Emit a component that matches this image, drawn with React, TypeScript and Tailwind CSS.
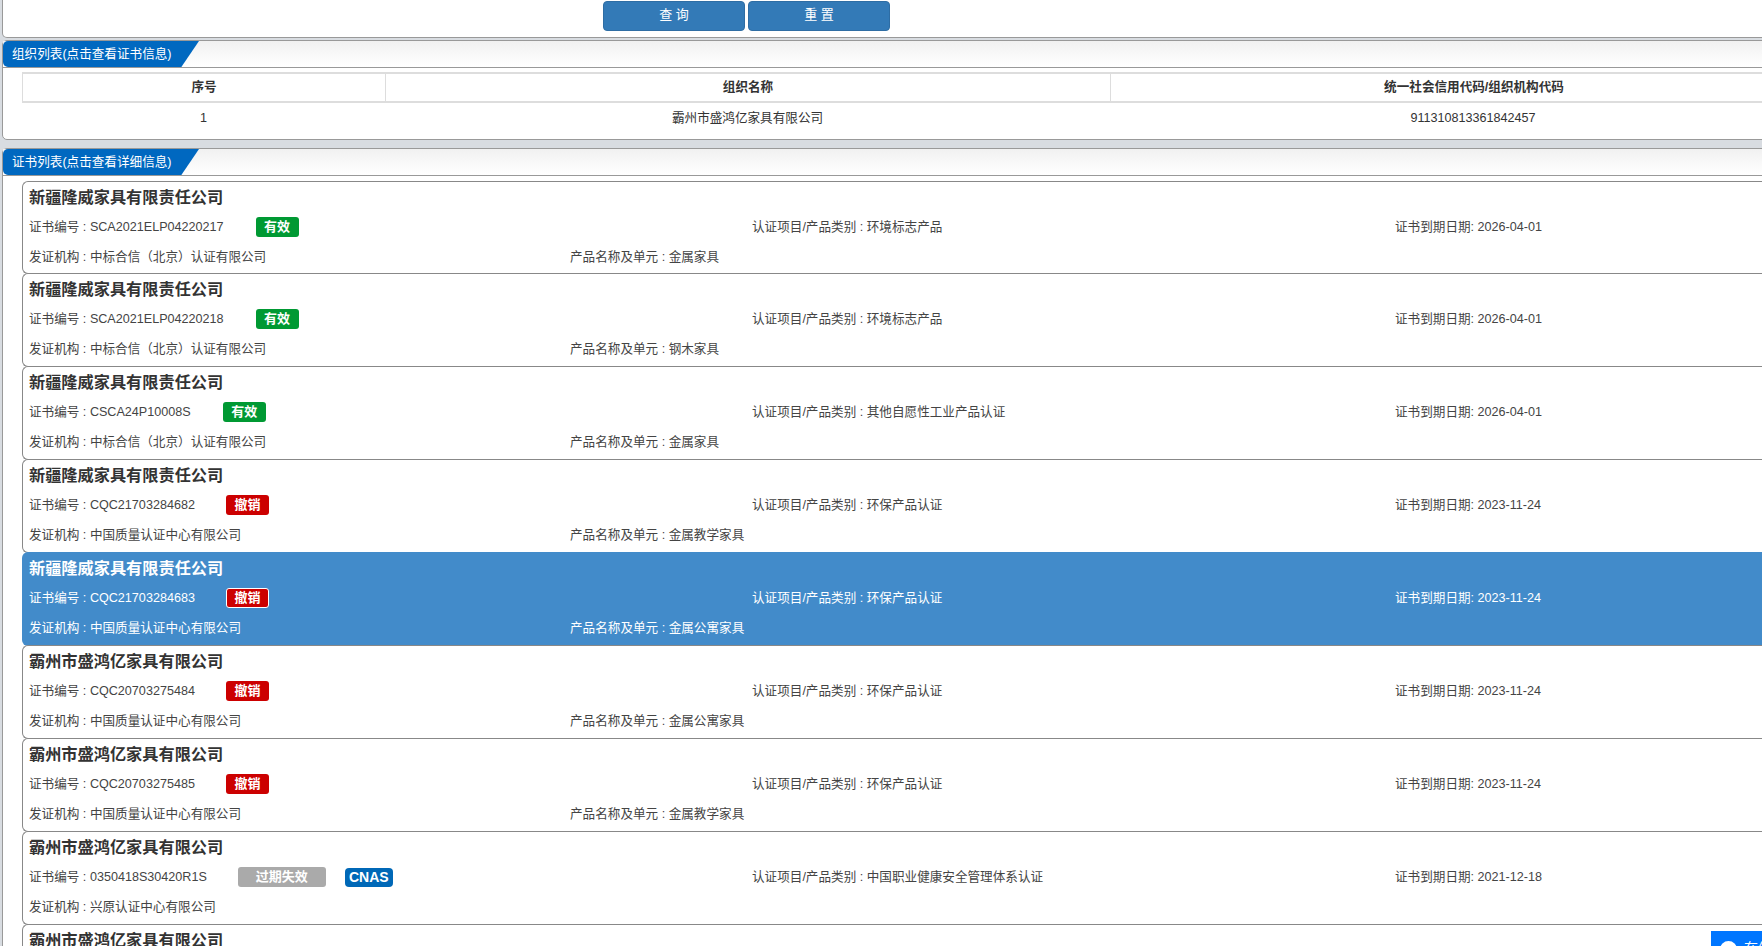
type Status = 'valid' | 'revoked' | 'expired';

interface ICert {
  company: string;
  code: string;
  project: string;
  expire: string;
  org: string;
  product?: string;
  status: Status;
  cnas?: boolean;
  active?: boolean;
}

const XJ = '新疆隆威家具有限责任公司';
const BZ = '霸州市盛鸿亿家具有限公司';
const ZB = '中标合信（北京）认证有限公司';
const CQC = '中国质量认证中心有限公司';

const certs: ICert[] = [
  { company: XJ, code: 'SCA2021ELP04220217', project: '环境标志产品', expire: '2026-04-01', org: ZB, product: '金属家具', status: 'valid' },
  { company: XJ, code: 'SCA2021ELP04220218', project: '环境标志产品', expire: '2026-04-01', org: ZB, product: '钢木家具', status: 'valid' },
  { company: XJ, code: 'CSCA24P10008S', project: '其他自愿性工业产品认证', expire: '2026-04-01', org: ZB, product: '金属家具', status: 'valid' },
  { company: XJ, code: 'CQC21703284682', project: '环保产品认证', expire: '2023-11-24', org: CQC, product: '金属教学家具', status: 'revoked' },
  { company: XJ, code: 'CQC21703284683', project: '环保产品认证', expire: '2023-11-24', org: CQC, product: '金属公寓家具', status: 'revoked', active: true },
  { company: BZ, code: 'CQC20703275484', project: '环保产品认证', expire: '2023-11-24', org: CQC, product: '金属公寓家具', status: 'revoked' },
  { company: BZ, code: 'CQC20703275485', project: '环保产品认证', expire: '2023-11-24', org: CQC, product: '金属教学家具', status: 'revoked' },
  { company: BZ, code: '0350418S30420R1S', project: '中国职业健康安全管理体系认证', expire: '2021-12-18', org: '兴原认证中心有限公司', status: 'expired', cnas: true },
];

const SectionHeader = ({ title }: { title: string }) => (
  <div className="flex h-[27px] border-b border-[#999] bg-gradient-to-b from-[#f1f1f1] to-white">
    <div className="h-[26px] w-[196px] rounded-l-[5px] bg-[#0068c0] pl-[9px] text-[12.6px] leading-[26px] text-white [clip-path:polygon(0_0,100%_0,91%_100%,0_100%)]">
      {title}
    </div>
  </div>
);

const StatusBadge = ({ status, active }: { status: Status; active?: boolean }) => {
  if (status === 'valid') {
    return <span className="ml-[32px] flex h-[20px] w-[43px] items-center justify-center rounded-[3px] bg-[#009933] text-[13px] font-bold text-white">有效</span>;
  }
  if (status === 'revoked') {
    return (
      <span className={`ml-[31px] flex h-[20px] w-[43px] items-center justify-center rounded-[3px] bg-[#cc0000] text-[13px] font-bold text-white ${active ? 'border border-white' : ''}`}>
        撤销
      </span>
    );
  }
  return <span className="ml-[31px] flex h-[20px] w-[88px] items-center justify-center rounded-[3px] bg-[#aaaaaa] text-[13px] font-bold text-white">过期失效</span>;
};

const CertCard = ({ cert }: { cert: ICert }) => (
  <div
    className={`-mb-px h-[94px] rounded-l-[6px] border-y border-l border-[#888] pl-[6px] first:h-[93px] ${
      cert.active ? 'border-transparent bg-[#428bca] text-white' : 'bg-white text-[#444]'
    }`}
  >
    <h3 className={`h-[30px] text-[16.2px] font-bold leading-[30px] ${cert.active ? 'text-white' : 'text-[#333]'}`}>{cert.company}</h3>
    <div className="flex h-[30px] items-center text-[12.6px]">
      <div className="flex w-[723px] items-center">
        <span>证书编号 : {cert.code}</span>
        <StatusBadge status={cert.status} active={cert.active} />
        {cert.cnas && (
          <span className="ml-[19px] flex h-[19px] w-[48px] items-center justify-center rounded-[4px] bg-[#0068b7] text-[14px] font-bold text-white">CNAS</span>
        )}
      </div>
      <div className="w-[643px]">认证项目/产品类别 : {cert.project}</div>
      <div>证书到期日期: {cert.expire}</div>
    </div>
    <div className="flex h-[30px] items-center text-[12.6px]">
      <div className="w-[541px]">发证机构 : {cert.org}</div>
      {cert.product && <div>产品名称及单元 : {cert.product}</div>}
    </div>
  </div>
);

export default function App() {
  return (
    <div className="relative h-[946px] w-[1762px] overflow-hidden bg-[#d8dce1] font-['Liberation_Sans','Noto_Sans_CJK_SC',sans-serif] text-[#333]">
      <div className="flex w-[1860px] flex-col gap-[2px] pl-[2px]">
        <div className="-mt-px h-[39px] rounded-b-[5px] border border-t-0 border-[#999] bg-white pt-[2px]">
          <div className="ml-[600px] flex gap-[3px]">
            <button className="h-[30px] w-[142px] rounded-[4px] border border-[#2e6da4] bg-[#337ab7] pb-[2px] text-[13px] text-white">查 询</button>
            <button className="h-[30px] w-[142px] rounded-[4px] border border-[#2e6da4] bg-[#337ab7] pb-[2px] text-[13px] text-white">重 置</button>
          </div>
        </div>

        <div className="h-[100px] rounded-[5px] border border-[#999] bg-white">
          <SectionHeader title="组织列表(点击查看证书信息)" />
          <div className="ml-[19px] mt-[4px] w-[1814px] text-center text-[12.6px]">
            <div className="grid h-[31px] grid-cols-[363px_725px_726px] border-y-2 border-l border-[#ddd] font-bold leading-[26px]">
              <div className="border-r border-[#ddd]">序号</div>
              <div className="border-r border-[#ddd]">组织名称</div>
              <div>统一社会信用代码/组织机构代码</div>
            </div>
            <div className="grid h-[31px] grid-cols-[363px_725px_726px] leading-[30px]">
              <div>1</div>
              <div>霸州市盛鸿亿家具有限公司</div>
              <div>911310813361842457</div>
            </div>
          </div>
        </div>

        <div className="mt-[6px] h-[820px] rounded-t-[5px] border border-[#999] bg-white">
          <SectionHeader title="证书列表(点击查看详细信息)" />
          <div className="ml-[19px] mt-[5px]">
            {certs.map((cert) => (
              <CertCard key={cert.code} cert={cert} />
            ))}
            <div className="h-[40px] rounded-l-[6px] border-y border-l border-[#888] pl-[6px]">
              <h3 className="h-[30px] text-[16.2px] font-bold leading-[30px]">{BZ}</h3>
            </div>
          </div>
        </div>
      </div>

      <div className="absolute left-[1711px] top-[931px] flex h-[15px] w-[51px] gap-[7px] overflow-hidden bg-[#0076ff] pl-[9px] pt-[10px] text-[14px] leading-[14px] text-white">
        <span className="h-[17px] w-[17px] shrink-0 rounded-full bg-white" />
        <span className="shrink-0">在线客服</span>
      </div>
    </div>
  );
}
